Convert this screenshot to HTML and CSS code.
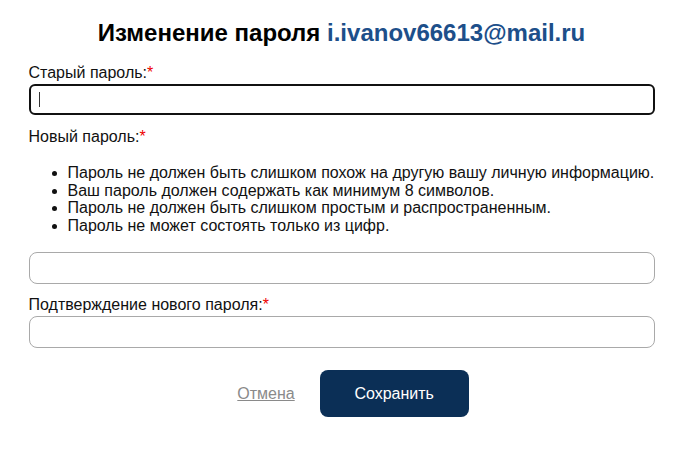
FILE: index.html
```html
<!DOCTYPE html>
<html lang="ru">
<head>
<meta charset="utf-8">
<link rel="stylesheet" href="styles.css">
</head>
<body>
<div class="page">
  <h1 class="title">Изменение пароля <span class="email">i.ivanov66613@mail.ru</span></h1>
  <form class="form">
    <div class="field">
      <label class="label">Старый пароль:<span class="req">*</span></label>
      <div class="input input-focus"><span class="caret"></span></div>
    </div>
    <div class="field field-new">
      <label class="label">Новый пароль:<span class="req">*</span></label>
      <ul class="rules">
        <li>Пароль не должен быть слишком похож на другую вашу личную информацию.</li>
        <li>Ваш пароль должен содержать как минимум 8 символов.</li>
        <li>Пароль не должен быть слишком простым и распространенным.</li>
        <li>Пароль не может состоять только из цифр.</li>
      </ul>
      <div class="input"></div>
    </div>
    <div class="field field-confirm">
      <label class="label">Подтверждение нового пароля:<span class="req">*</span></label>
      <div class="input"></div>
    </div>
    <div class="actions">
      <a class="cancel" href="#">Отмена</a>
      <button type="button" class="save">Сохранить</button>
    </div>
  </form>
</div>
</body>
</html>
```
FILE: styles.css
```css
html, body {
  margin: 0;
  padding: 0;
  background: #fff;
}
body {
  font-family: "Liberation Sans", Arial, sans-serif;
  color: #111;
}
.page {
  width: 626px;
  margin: 0 auto;
  padding-top: 19px;
}
.title {
  margin: 0;
  text-align: center;
  font-size: 24px;
  font-weight: bold;
  line-height: 28px;
  color: #000;
}
.email {
  color: #1d4f8a;
}
.form {
  margin-top: 17px;
  display: flex;
  flex-direction: column;
}
.field {
  display: flex;
  flex-direction: column;
}
.label {
  font-size: 16px;
  line-height: 18px;
  margin-bottom: 2px;
}
.req {
  color: #e00;
}
.input {
  height: 32px;
  box-sizing: border-box;
  border: 1px solid #a9a9a9;
  border-radius: 8px;
  background: #fff;
  display: flex;
  align-items: center;
  padding-left: 8px;
}
.input-focus {
  height: 31px;
  border: 2px solid #111;
  border-radius: 6px;
}
.caret {
  width: 1px;
  height: 15px;
  background: #333;
}
.field-new {
  margin-top: 13px;
}
.rules {
  margin: 16px 0 18px;
  padding-left: 39px;
  font-size: 16px;
  line-height: 17.6px;
}
.field-confirm {
  margin-top: 12px;
}
.actions {
  margin-top: 22px;
  display: flex;
  justify-content: center;
  align-items: center;
  gap: 25px;
}
.cancel {
  color: #8a8a8a;
  font-size: 16px;
  text-decoration: underline;
  margin-left: 23px;
}
.save {
  width: 149px;
  height: 47px;
  border: none;
  border-radius: 8px;
  background: #0b2f56;
  color: #fff;
  font-family: "Liberation Sans", Arial, sans-serif;
  font-size: 16px;
}
```
